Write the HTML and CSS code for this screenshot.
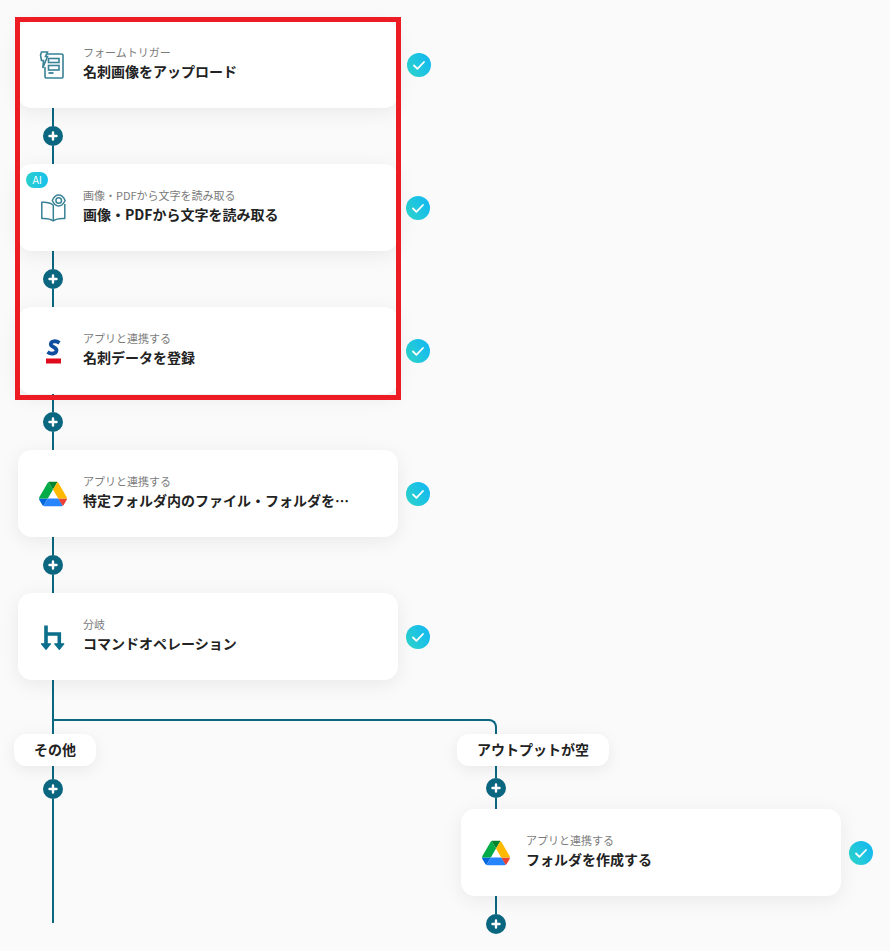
FILE: index.html
```html
<!DOCTYPE html>
<html lang="ja">
<head>
<meta charset="utf-8">
<title>フロー</title>
<link rel="stylesheet" href="styles.css">
</head>
<body>
<svg class="defs" width="0" height="0" aria-hidden="true">
  <symbol id="drive" viewBox="0 0 87.3 78">
    <path d="m6.6 66.85 3.85 6.65c.8 1.4 1.95 2.5 3.3 3.3l13.75-23.8h-27.5c0 1.55.4 3.1 1.2 4.5z" fill="#0066da"/>
    <path d="m43.65 25-13.75-23.8c-1.35.8-2.5 1.9-3.3 3.3l-25.4 44a9.06 9.06 0 0 0 -1.2 4.5h27.5z" fill="#00ac47"/>
    <path d="m73.55 76.8c1.35-.8 2.5-1.9 3.3-3.3l1.6-2.75 7.65-13.25c.8-1.4 1.2-2.95 1.2-4.5h-27.502l5.852 11.5z" fill="#ea4335"/>
    <path d="m43.65 25 13.75-23.8c-1.35-.8-2.9-1.2-4.5-1.2h-18.5c-1.6 0-3.15.45-4.5 1.2z" fill="#00832d"/>
    <path d="m59.8 53h-32.3l-13.75 23.8c1.35.8 2.9 1.2 4.5 1.2h50.8c1.6 0 3.15-.45 4.5-1.2z" fill="#2684fc"/>
    <path d="m73.4 26.5-12.7-22c-.8-1.4-1.95-2.5-3.3-3.3l-13.75 23.8 16.15 28h27.45c0-1.55-.4-3.1-1.2-4.5z" fill="#ffba00"/>
  </symbol>
  <symbol id="plus" viewBox="0 0 20 20">
    <circle cx="10" cy="10" r="10" fill="#0b6680"/>
    <path d="M10 6.500v7M6.500 10h7" stroke="#fff" stroke-width="2.400" stroke-linecap="round"/>
  </symbol>
  <symbol id="check" viewBox="0 0 24 24">
    <path d="M7 12.500l3.400 3.400L17 9" fill="none" stroke="#fff" stroke-width="1.800" stroke-linecap="round" stroke-linejoin="round"/>
  </symbol>
</svg>

<main class="flow">
  <div class="highlight"></div>

  <div class="step">
    <div class="card">
      <svg class="icon" viewBox="0 0 30 30" fill="none" stroke="#3a8296" stroke-width="1.600">
        <path d="M6.500 4H23.500a1.500 1.500 0 0 1 1.500 1.500V27a1 1 0 0 1-1 1H8.500a1.500 1.500 0 0 1-1.500-1.500V17"/>
        <path d="M3.500 2H9.500L7.500 6.500H9.500L4.800 18 5.500 10.500H3.500L2.500 5z" fill="#fff"/>
        <rect x="10.500" y="8.500" width="10.500" height="4"/>
        <rect x="10.500" y="15.500" width="10.500" height="4.500"/>
        <path d="M10.500 23h5" stroke-width="1.800"/>
      </svg>
      <div class="text">
        <div class="sub">フォームトリガー</div>
        <div class="title">名刺画像をアップロード</div>
      </div>
    </div>
    <svg class="check check-first" viewBox="0 0 24 24"><use href="#check"/></svg>
  </div>

  <div class="conn"><span class="stem"></span><svg class="plus"><use href="#plus"/></svg><span class="stem"></span></div>

  <div class="step">
    <div class="card">
      <span class="badge">AI</span>
      <svg class="icon" viewBox="0 0 30 30" fill="none" stroke="#3a8296" stroke-width="1.500" stroke-linejoin="round">
        <path d="M15.300 12C12.500 9.800 8 9 3.800 9.300V25.500C8 25.200 12.500 25.800 15.300 27.800 18 25.800 22.500 25.200 26.800 25.500V11"/>
        <path d="M15.300 12V27.800"/>
        <path d="M14.300 7.500C15.800 4 18.200 2 20.700 2S25.600 4 27.100 7.500C25.600 11 23.200 13 20.700 13S15.800 11 14.300 7.500z" fill="#fff"/>
        <circle cx="20.700" cy="7.500" r="2.800"/>
      </svg>
      <div class="text">
        <div class="sub">画像・PDFから文字を読み取る</div>
        <div class="title">画像・PDFから文字を読み取る</div>
      </div>
    </div>
    <svg class="check" viewBox="0 0 24 24"><use href="#check"/></svg>
  </div>

  <div class="conn"><span class="stem"></span><svg class="plus"><use href="#plus"/></svg><span class="stem"></span></div>

  <div class="step">
    <div class="card">
      <svg class="icon" viewBox="0 0 30 30" fill="none">
        <path d="M21.500 6.800C17.500 4.300 13.300 5 12.800 8 12.300 11 19 11 18.500 14.500 18 18 13 18.500 9.500 16" stroke="#0d4f9e" stroke-width="3.800"/>
        <rect x="8" y="22.500" width="15" height="5" fill="#e00b1c"/>
      </svg>
      <div class="text">
        <div class="sub">アプリと連携する</div>
        <div class="title">名刺データを登録</div>
      </div>
    </div>
    <svg class="check" viewBox="0 0 24 24"><use href="#check"/></svg>
  </div>

  <div class="conn"><span class="stem"></span><svg class="plus"><use href="#plus"/></svg><span class="stem"></span></div>

  <div class="step">
    <div class="card">
      <svg class="icon"><use href="#drive" x="1" y="2.500" width="28" height="25"/></svg>
      <div class="text">
        <div class="sub">アプリと連携する</div>
        <div class="title">特定フォルダ内のファイル・フォルダを…</div>
      </div>
    </div>
    <svg class="check" viewBox="0 0 24 24"><use href="#check"/></svg>
  </div>

  <div class="conn"><span class="stem"></span><svg class="plus"><use href="#plus"/></svg><span class="stem"></span></div>

  <div class="step">
    <div class="card">
      <svg class="icon" viewBox="0 0 30 30" fill="none">
        <path d="M8 3.500V22M6.200 12H21.300V22" stroke="#0b6f8c" stroke-width="3.600"/>
        <path d="M3.500 21.800H12.500L8 27.300zM16.800 21.800H25.800L21.300 27.300z" fill="#0b6f8c" stroke="#0b6f8c" stroke-width="1.200" stroke-linejoin="round"/>
      </svg>
      <div class="text">
        <div class="sub">分岐</div>
        <div class="title">コマンドオペレーション</div>
      </div>
    </div>
    <svg class="check" viewBox="0 0 24 24"><use href="#check"/></svg>
  </div>

  <div class="trunk"></div>
  <div class="rail"></div>

  <div class="branches">
    <div class="branch branch-left">
      <div class="label">その他</div>
      <div class="conn conn-long"><span class="stem stem-a"></span><svg class="plus"><use href="#plus"/></svg><span class="stem stem-b"></span></div>
    </div>
    <div class="branch">
      <div class="label">アウトプットが空</div>
      <div class="conn conn-short"><span class="stem"></span><svg class="plus"><use href="#plus"/></svg><span class="stem"></span></div>
      <div class="step">
        <div class="card">
          <svg class="icon"><use href="#drive" x="1" y="2.500" width="28" height="25"/></svg>
          <div class="text">
            <div class="sub">アプリと連携する</div>
            <div class="title">フォルダを作成する</div>
          </div>
        </div>
        <svg class="check" viewBox="0 0 24 24"><use href="#check"/></svg>
      </div>
      <div class="conn conn-end"><span class="stem"></span><svg class="plus"><use href="#plus"/></svg></div>
    </div>
  </div>
</main>
</body>
</html>
```

FILE: styles.css
```css
* { box-sizing: border-box; }

html, body {
  margin: 0;
  height: 100%;
}

body {
  background: #fafafa;
  color: #222;
  font-family: "Noto Sans CJK JP", "Noto Sans", sans-serif;
  overflow: hidden;
}

.defs { position: absolute; }

.flow {
  position: relative;
  padding: 21px 0 0 14px;
}

.highlight {
  position: absolute;
  left: 15px;
  top: 17px;
  width: 386px;
  height: 383px;
  border: 5px solid #ed1c24;
  z-index: 2;
  pointer-events: none;
}

.step {
  display: flex;
  align-items: center;
  gap: 8px;
  margin-left: 4px;
}

.card {
  position: relative;
  display: flex;
  align-items: center;
  gap: 15px;
  width: 380px;
  height: 87px;
  padding-left: 20px;
  background: #fff;
  border-radius: 14px;
  box-shadow: 0 4px 20px rgba(0, 0, 0, .07);
}

.icon {
  flex: none;
  width: 30px;
  height: 30px;
}

.text {
  width: 285px;
  margin-top: -4px;
}

.sub {
  font-size: 11px;
  line-height: 16px;
  color: #7b7b7b;
  margin-bottom: 1px;
}

.title {
  font-size: 14px;
  line-height: 20px;
  font-weight: 700;
  color: #222;
  white-space: nowrap;
}

.badge {
  position: absolute;
  left: 8px;
  top: 8px;
  width: 22px;
  height: 16px;
  border-radius: 8px;
  background: linear-gradient(90deg, #2bd0cc, #17c0ee);
  color: #fff;
  font: 400 10px/16px "Inter", sans-serif;
  text-align: center;
}

.check {
  flex: none;
  width: 24px;
  height: 24px;
  border-radius: 50%;
  background: linear-gradient(60deg, #2fd6c8, #10b5f5);
}

.check-first { margin-left: 1px; }

.conn {
  display: flex;
  flex-direction: column;
  align-items: center;
  width: 20px;
  height: 56px;
  margin-left: 29px;
}

.stem {
  flex: 1;
  width: 2px;
  background: #0b6680;
}

.plus {
  flex: none;
  display: block;
  width: 20px;
  height: 20px;
}

.trunk {
  width: 2px;
  height: 39px;
  margin-left: 38px;
  background: #0b6680;
}

.rail {
  width: 445px;
  height: 15px;
  margin-left: 38px;
  border-top: 2px solid #0b6680;
  border-left: 2px solid #0b6680;
  border-right: 2px solid #0b6680;
  border-top-right-radius: 8px;
}

.branches { display: flex; }

.branch {
  display: flex;
  flex-direction: column;
  align-items: flex-start;
}

.branch-left { width: 443px; }

.label {
  position: relative;
  height: 32px;
  padding: 0 20px;
  background: #fff;
  border-radius: 12px;
  box-shadow: 0 4px 16px rgba(0, 0, 0, .07);
  font-size: 14px;
  line-height: 30px;
  font-weight: 700;
  color: #222;
}

.conn-long { height: 157px; }
.conn-long .stem-a { flex: none; height: 13px; }
.conn-long .stem-b { flex: none; height: 124px; }

.conn-short { height: 43px; }
.conn-short .stem:first-child { flex: none; height: 12px; }
.conn-short .stem:last-child { flex: none; height: 11px; }

.conn-end { height: 38px; }
.conn-end .stem { flex: none; height: 18px; }
```
